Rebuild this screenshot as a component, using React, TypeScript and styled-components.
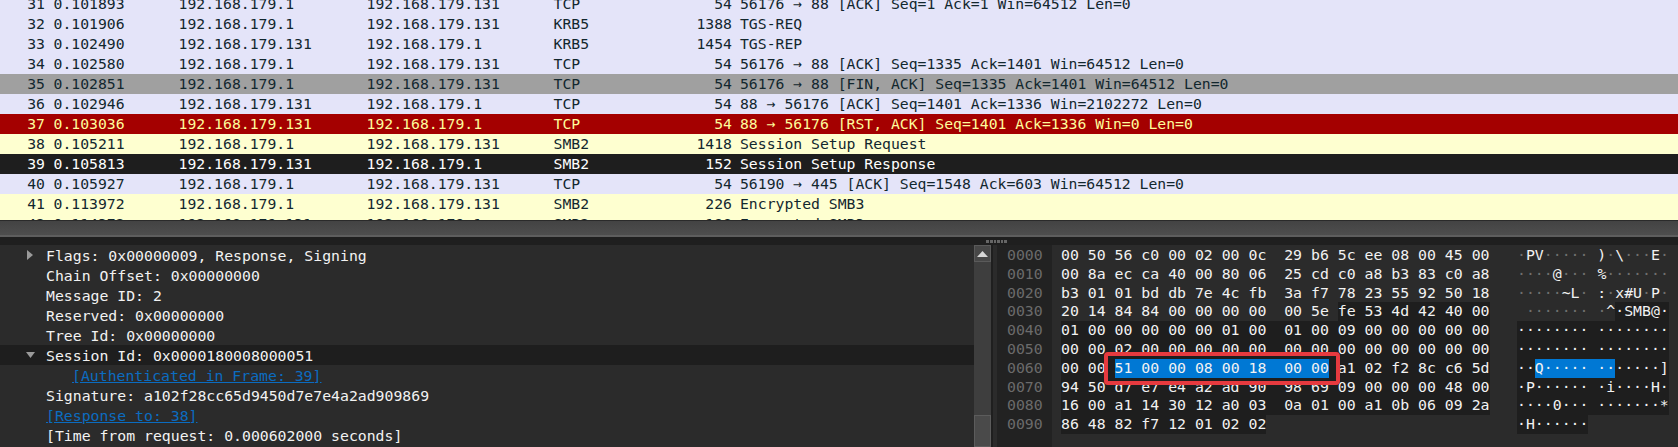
import React from 'react';
import styled, { createGlobalStyle } from 'styled-components';

const MONO = `"DejaVu Sans Mono", "Liberation Mono", monospace`;

const Global = createGlobalStyle`
  html, body { margin: 0; padding: 0; background: #2b2b2b; overflow: hidden; }
`;

type Tone = 'tcp' | 'gray' | 'red' | 'yellow' | 'black';

const tones: Record<Tone, { bg: string; fg: string }> = {
  tcp: { bg: '#e4e4f9', fg: '#12272e' },
  gray: { bg: '#a0a0a0', fg: '#12272e' },
  red: { bg: '#a40000', fg: '#fffc9c' },
  yellow: { bg: '#feffd0', fg: '#12272e' },
  black: { bg: '#1e1e1e', fg: '#ffffff' },
};

const packets: [string, string, string, string, string, string, string, Tone][] = [
  ['31', '0.101893', '192.168.179.1', '192.168.179.131', 'TCP', '54', '56176 → 88 [ACK] Seq=1 Ack=1 Win=64512 Len=0', 'tcp'],
  ['32', '0.101906', '192.168.179.1', '192.168.179.131', 'KRB5', '1388', 'TGS-REQ', 'tcp'],
  ['33', '0.102490', '192.168.179.131', '192.168.179.1', 'KRB5', '1454', 'TGS-REP', 'tcp'],
  ['34', '0.102580', '192.168.179.1', '192.168.179.131', 'TCP', '54', '56176 → 88 [ACK] Seq=1335 Ack=1401 Win=64512 Len=0', 'tcp'],
  ['35', '0.102851', '192.168.179.1', '192.168.179.131', 'TCP', '54', '56176 → 88 [FIN, ACK] Seq=1335 Ack=1401 Win=64512 Len=0', 'gray'],
  ['36', '0.102946', '192.168.179.131', '192.168.179.1', 'TCP', '54', '88 → 56176 [ACK] Seq=1401 Ack=1336 Win=2102272 Len=0', 'tcp'],
  ['37', '0.103036', '192.168.179.131', '192.168.179.1', 'TCP', '54', '88 → 56176 [RST, ACK] Seq=1401 Ack=1336 Win=0 Len=0', 'red'],
  ['38', '0.105211', '192.168.179.1', '192.168.179.131', 'SMB2', '1418', 'Session Setup Request', 'yellow'],
  ['39', '0.105813', '192.168.179.131', '192.168.179.1', 'SMB2', '152', 'Session Setup Response', 'black'],
  ['40', '0.105927', '192.168.179.1', '192.168.179.131', 'TCP', '54', '56190 → 445 [ACK] Seq=1548 Ack=603 Win=64512 Len=0', 'tcp'],
  ['41', '0.113972', '192.168.179.1', '192.168.179.131', 'SMB2', '226', 'Encrypted SMB3', 'yellow'],
  ['42', '0.114372', '192.168.179.131', '192.168.179.1', 'SMB2', '198', 'Encrypted SMB3', 'yellow'],
];

const Page = styled.div`
  width: 1678px;
  height: 447px;
  overflow: hidden;
  display: flex;
  flex-direction: column;
  background: #2b2b2b;
`;

const PacketList = styled.div`
  height: 220px;
  flex: none;
  overflow: hidden;
  background: #feffd0;
`;

const PacketRows = styled.div`
  margin-top: -6px;
`;

const PacketRow = styled.div<{ $tone: Tone }>`
  display: grid;
  grid-template-columns: 45px 133.6px 188px 187px 178.4px 1fr;
  height: 20px;
  line-height: 20px;
  font-family: ${MONO};
  font-size: 14.75px;
  white-space: pre;
  background: ${(p) => tones[p.$tone].bg};
  color: ${(p) => tones[p.$tone].fg};
`;

const NoCell = styled.span`
  text-align: right;
`;

const TimeCell = styled.span`
  padding-left: 8.5px;
`;

const ProtoLenCell = styled.span`
  display: flex;
  justify-content: space-between;
`;

const InfoCell = styled.span`
  padding-left: 8px;
`;

const Splitter = styled.div`
  flex: none;
  height: 17px;
  box-sizing: border-box;
  border-top: 1px solid #2a2a2a;
  border-bottom: 2px solid #5e5e5e;
  background: linear-gradient(#434343, #4e4e4e);
`;

const GripStrip = styled.div`
  flex: none;
  height: 8px;
  background: #1f1f1f;
  display: flex;
  justify-content: flex-end;
  align-items: center;
  gap: 1px;
  padding-right: 671px;
`;

const GripDot = styled.i`
  display: block;
  width: 2.6px;
  height: 3px;
  background: #666;
`;

const Panes = styled.div`
  flex: 1;
  display: flex;
  min-height: 0;
`;

const Details = styled.div`
  width: 974px;
  flex: none;
  background: #2b2b2b;
  font-family: ${MONO};
  font-size: 14.8px;
  color: #f2f2f2;
`;

const DetailRow = styled.div<{ $active?: boolean; $indent?: number }>`
  display: flex;
  align-items: center;
  height: 20px;
  white-space: pre;
  padding-left: ${(p) => p.$indent ?? 46}px;
  background: ${(p) => (p.$active ? '#1e1e1e' : 'transparent')};
  position: relative;
`;

const Expander = styled.svg`
  position: absolute;
  left: 26px;
  top: 5px;
  width: 9px;
  height: 10px;
  fill: #9a9a9a;
`;

const DetailLink = styled.span`
  color: #0b6cc0;
  text-decoration: underline;
`;

const Scrollbar = styled.div`
  flex: none;
  width: 17px;
  background: #3e3e3e;
  display: flex;
  flex-direction: column;
  border-right: 2px solid #1f1f1f;
  box-sizing: content-box;
`;

const ScrollUp = styled.div`
  flex: none;
  height: 17px;
  box-sizing: border-box;
  border: 1px solid #5a5a5a;
  background: #474747;
  display: flex;
  align-items: center;
  justify-content: center;
`;

const ScrollTrack = styled.div`
  flex: none;
  height: 153px;
  background: #3e3e3e;
`;

const ScrollThumb = styled.div`
  flex: 1;
  background: #4a4a4a;
  border: 1px solid #5c5c5c;
`;

const UpArrow = styled.svg`
  width: 11px;
  height: 6px;
  fill: #d6d6d6;
`;

const HexPane = styled.div`
  flex: 1;
  position: relative;
  display: flex;
  font-family: ${MONO};
  font-size: 14.83px;
  line-height: 18.8px;
  white-space: pre;
  color: #f2f2f2;
`;

const OffsetColumn = styled.div`
  flex: none;
  margin-left: 4px;
  width: 55px;
  box-sizing: border-box;
  padding: 1px 0 0 10px;
  background: #222222;
  color: #6b6b6b;
`;

const HexColumn = styled.div`
  flex: none;
  margin-left: 9px;
  padding-top: 1px;
  width: 456px;
`;

const AsciiColumn = styled.div`
  flex: none;
  padding-top: 1px;
`;

const HexLine = styled.div`
  height: 18.8px;
`;

const Byte = styled.span<{ $mark?: 'field' | 'sel' }>`
  background: ${(p) => (p.$mark === 'sel' ? '#0078d4' : p.$mark === 'field' ? '#1e1e1e' : 'transparent')};
  display: inline-block;
  height: 18.8px;
  vertical-align: top;
`;

const Dim = styled.span`
  color: #6f6f6f;
`;

const Callout = styled.div`
  position: absolute;
  left: 111px;
  top: 107px;
  width: 236px;
  height: 33px;
  box-sizing: border-box;
  border: 4px solid #e63a3f;
  border-radius: 4px;
  pointer-events: none;
`;

const hexRows = [
  ['0000', '00 50 56 c0 00 02 00 0c  29 b6 5c ee 08 00 45 00'],
  ['0010', '00 8a ec ca 40 00 80 06  25 cd c0 a8 b3 83 c0 a8'],
  ['0020', 'b3 01 01 bd db 7e 4c fb  3a f7 78 23 55 92 50 18'],
  ['0030', '20 14 84 84 00 00 00 00  00 5e fe 53 4d 42 40 00'],
  ['0040', '01 00 00 00 00 00 01 00  01 00 09 00 00 00 00 00'],
  ['0050', '00 00 02 00 00 00 00 00  00 00 00 00 00 00 00 00'],
  ['0060', '00 00 51 00 00 08 00 18  00 00 a1 02 f2 8c c6 5d'],
  ['0070', '94 50 d7 e7 e4 a2 ad 90  98 69 09 00 00 00 48 00'],
  ['0080', '16 00 a1 14 30 12 a0 03  0a 01 00 a1 0b 06 09 2a'],
  ['0090', '86 48 82 f7 12 01 02 02'],
];

// splits a line into plain / field / selected pieces by character index
const hexParts = (i: number, text: string): [string, 'field' | 'sel' | undefined][] => {
  if (i < 3) return [[text, undefined]];
  if (i === 3) return [[text.slice(0, 31), undefined], [text.slice(31), 'field']];
  if (i === 6) {
    return [[text.slice(0, 6), 'field'], [text.slice(6, 30), 'sel'], [text.slice(30), 'field']];
  }
  return [[text, 'field']];
};

const toAscii = (text: string) => {
  const groups = text.split('  ');
  const conv = (g: string) =>
    g.split(' ').map((h) => {
      const v = parseInt(h, 16);
      return v > 32 && v < 127 ? String.fromCharCode(v) : v === 32 ? ' ' : '·';
    }).join('');
  return groups.map(conv).join(' ');
};

const AsciiText: React.FC<{ text: string; bright?: boolean }> = ({ text, bright }) => {
  if (bright) return <>{text}</>;
  return (
    <>
      {text.split(/(·+)/).map((part, i) =>
        part.startsWith('·') ? <Dim key={i}>{part}</Dim> : <span key={i}>{part}</span>,
      )}
    </>
  );
};

const asciiParts = (i: number, text: string): [string, 'field' | 'sel' | undefined][] => {
  if (i < 3) return [[text, undefined]];
  if (i === 3) return [[text.slice(0, 11), undefined], [text.slice(11), 'field']];
  if (i === 6) return [[text.slice(0, 2), 'field'], [text.slice(2, 11), 'sel'], [text.slice(11), 'field']];
  return [[text, 'field']];
};

const details: { text: string; link?: boolean; indent?: number; active?: boolean; arrow?: 'right' | 'down' }[] = [
  { text: 'Flags: 0x00000009, Response, Signing', arrow: 'right' },
  { text: 'Chain Offset: 0x00000000' },
  { text: 'Message ID: 2' },
  { text: 'Reserved: 0x00000000' },
  { text: 'Tree Id: 0x00000000' },
  { text: 'Session Id: 0x0000180008000051', active: true, arrow: 'down' },
  { text: '[Authenticated in Frame: 39]', link: true, indent: 72 },
  { text: 'Signature: a102f28cc65d9450d7e7e4a2ad909869' },
  { text: '[Response to: 38]', link: true },
  { text: '[Time from request: 0.000602000 seconds]' },
];

export default function App() {
  return (
    <Page>
      <Global />
      <PacketList>
        <PacketRows>
          {packets.map(([no, time, src, dst, proto, len, info, tone]) => (
            <PacketRow key={no} $tone={tone}>
              <NoCell>{no}</NoCell>
              <TimeCell>{time}</TimeCell>
              <span>{src}</span>
              <span>{dst}</span>
              <ProtoLenCell>
                <span>{proto}</span>
                <span>{len}</span>
              </ProtoLenCell>
              <InfoCell>{info}</InfoCell>
            </PacketRow>
          ))}
        </PacketRows>
      </PacketList>
      <Splitter />
      <GripStrip>
        {[0, 1, 2, 3, 4, 5].map((d) => (
          <GripDot key={d} />
        ))}
      </GripStrip>
      <Panes>
        <Details>
          {details.map((d) => (
            <DetailRow key={d.text} $active={d.active} $indent={d.indent}>
              {d.arrow === 'right' && (
                <Expander viewBox="0 0 9 10">
                  <path d="M1 0 L7 5 L1 10 Z" />
                </Expander>
              )}
              {d.arrow === 'down' && (
                <Expander viewBox="0 0 9 10">
                  <path d="M0 2 L9 2 L4.5 8 Z" />
                </Expander>
              )}
              {d.link ? <DetailLink>{d.text}</DetailLink> : d.text}
            </DetailRow>
          ))}
        </Details>
        <Scrollbar>
          <ScrollUp>
            <UpArrow viewBox="0 0 11 6">
              <path d="M5.5 0 L11 6 L0 6 Z" />
            </UpArrow>
          </ScrollUp>
          <ScrollTrack />
          <ScrollThumb />
        </Scrollbar>
        <HexPane>
          <OffsetColumn>
            {hexRows.map(([off]) => (
              <HexLine key={off}>{off}</HexLine>
            ))}
          </OffsetColumn>
          <HexColumn>
            {hexRows.map(([off, text], i) => (
              <HexLine key={off}>
                {hexParts(i, text).map(([t, mark], j) => (
                  <Byte key={j} $mark={mark}>{t}</Byte>
                ))}
              </HexLine>
            ))}
          </HexColumn>
          <AsciiColumn>
            {hexRows.map(([off, text], i) => (
              <HexLine key={off}>
                {asciiParts(i, toAscii(text)).map(([t, mark], j) => (
                  <Byte key={j} $mark={mark}>
                    <AsciiText text={t} bright={!!mark} />
                  </Byte>
                ))}
              </HexLine>
            ))}
          </AsciiColumn>
          <Callout />
        </HexPane>
      </Panes>
    </Page>
  );
}
